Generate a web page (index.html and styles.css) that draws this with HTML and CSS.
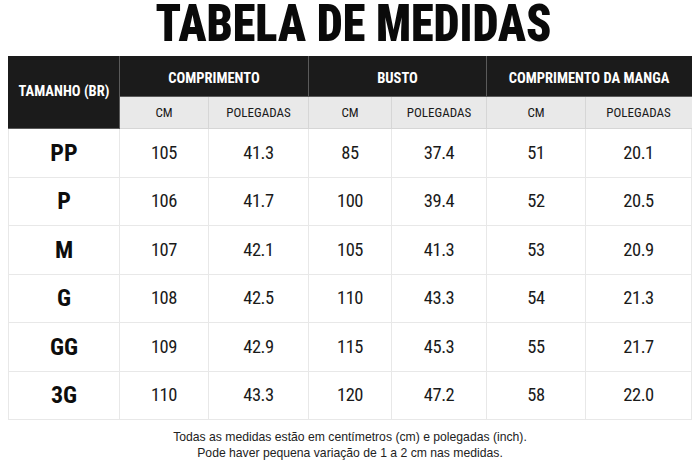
FILE: index.html
```html
<!DOCTYPE html>
<html lang="pt-BR"><head><meta charset="utf-8"><title>Tabela de Medidas</title><link rel="stylesheet" href="styles.css"></head>
<body>
<div class="page">
  <h1 class="title"><span class="title-text">TABELA DE MEDIDAS</span></h1>
  <table class="sizes">
    <colgroup>
      <col class="c1"><col class="c2"><col class="c3"><col class="c4"><col class="c5"><col class="c6"><col class="c7">
    </colgroup>
    <thead>
      <tr class="head1">
        <th rowspan="2" class="size-head">TAMANHO (BR)</th>
        <th colspan="2">COMPRIMENTO</th>
        <th colspan="2">BUSTO</th>
        <th colspan="2">COMPRIMENTO DA MANGA</th>
      </tr>
      <tr class="head2">
        <th>CM</th><th>POLEGADAS</th>
        <th>CM</th><th>POLEGADAS</th>
        <th>CM</th><th>POLEGADAS</th>
      </tr>
    </thead>
    <tbody>
      <tr><th>PP</th><td>105</td><td>41.3</td><td>85</td><td>37.4</td><td>51</td><td>20.1</td></tr>
      <tr><th>P</th><td>106</td><td>41.7</td><td>100</td><td>39.4</td><td>52</td><td>20.5</td></tr>
      <tr><th>M</th><td>107</td><td>42.1</td><td>105</td><td>41.3</td><td>53</td><td>20.9</td></tr>
      <tr><th>G</th><td>108</td><td>42.5</td><td>110</td><td>43.3</td><td>54</td><td>21.3</td></tr>
      <tr><th>GG</th><td>109</td><td>42.9</td><td>115</td><td>45.3</td><td>55</td><td>21.7</td></tr>
      <tr><th>3G</th><td>110</td><td>43.3</td><td>120</td><td>47.2</td><td>58</td><td>22.0</td></tr>
    </tbody>
  </table>
  <p class="note">Todas as medidas estão em centímetros (cm) e polegadas (inch).<br>Pode haver pequena variação de 1 a 2 cm nas medidas.</p>
</div>
</body></html>
```
FILE: styles.css
```css
html,body{margin:0;padding:0;background:#fff}
.page{width:700px;height:467px;overflow:hidden;font-family:"Roboto",sans-serif;font-stretch:condensed;color:#111}
.title{margin:0;padding-left:8px;height:56px;display:flex;justify-content:center;align-items:flex-start;font-size:52px;font-weight:900;line-height:48px;color:#0a0a0a}
.title-text{display:inline-block;transform:scaleX(0.89)}
.sizes{margin:0 0 0 8px;width:683px;border-collapse:collapse;table-layout:fixed}
.c1{width:111px}.c2{width:89px}.c3{width:100px}.c4{width:83px}.c5{width:95px}.c6{width:99px}.c7{width:106px}
.sizes th,.sizes td{padding:0;text-align:center;vertical-align:middle}
.head1 th{background:#1b1b1b;color:#fff;font-size:14.5px;font-weight:700;height:36px;padding-top:3px;border:1px solid #5a5a5a;border-top-color:#1b1b1b}
.head1 th:first-child{border-left-color:#1b1b1b}
.head1 th:last-child{border-right-color:#1b1b1b}
.head1 .size-head{font-size:14.5px;padding-top:0;padding-bottom:3px}
.head2 th{background:#e9e9e9;color:#1a1a1a;font-size:13px;font-weight:400;height:31px;border:1px solid #d6d6d6;border-top:none}
.head2 th:last-child{border-right-color:#e9e9e9}
tbody th,tbody td{height:47.5px;border:1px solid #e8e8e8;padding-top:2px}
tbody th{font-size:24px;font-weight:700;color:#0d0d0d}
tbody td{font-size:18.5px;font-weight:400;letter-spacing:-0.4px;color:#1a1a1a}
.note{margin:9px 0 0;text-align:center;font-family:"Liberation Sans",Arial,sans-serif;font-stretch:normal;font-size:12.2px;line-height:16px;color:#222}
```
